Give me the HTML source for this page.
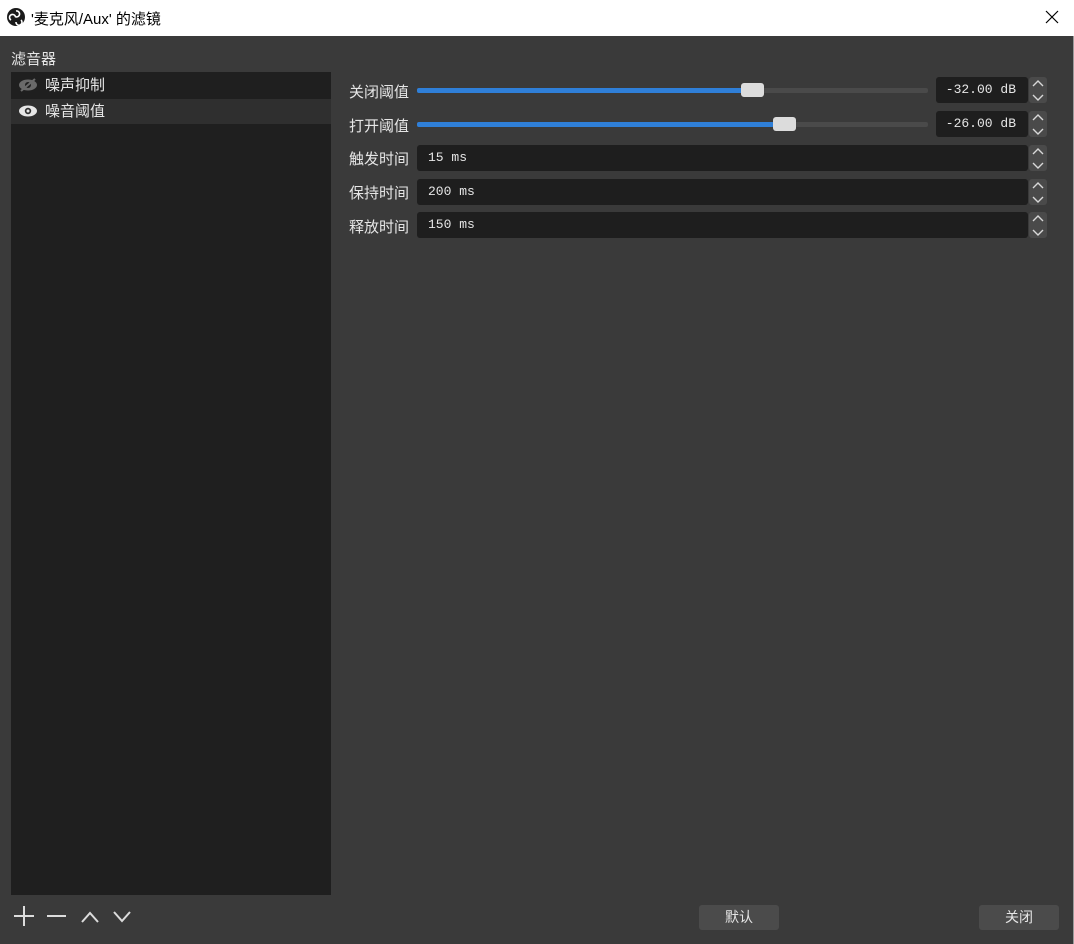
<!DOCTYPE html>
<html><head><meta charset="utf-8"><style>
*{margin:0;padding:0;box-sizing:border-box}
body{width:1074px;height:944px;background:#3a3a3a;font-family:"Liberation Sans","Noto Sans CJK SC",sans-serif;color:#e6e6e6;position:relative;overflow:hidden;font-size:14px}
.abs{position:absolute}
.title{left:0;top:0;width:1074px;height:36px;background:#fff;color:#000;font-size:15px}
.list{left:11px;top:72px;width:320px;height:823px;background:#1f1f1f}
.row{position:absolute;left:0;width:320px;height:25px;line-height:25px;padding-left:34px;font-size:15px}
.lbl{position:absolute;left:349px;font-size:15px;color:#e6e6e6}
.track{position:absolute;left:417px;width:511px;height:5px;background:#4a4a4a;border-radius:2px}
.fill{position:absolute;left:0;top:0;height:5px;background:#2f7fd8;border-radius:2px}
.thumb{position:absolute;top:-5px;width:23px;height:14px;background:#dcdcdc;border-radius:3px}
.box{position:absolute;background:#1e1e1e;border-radius:3px;font-family:"Liberation Mono","Noto Sans CJK SC",monospace;font-size:13px;color:#e6e6e6;line-height:26px}
.spin{position:absolute;left:1029px;width:18px;height:26px;background:#4a4a4a;border-radius:3px}
.btn{position:absolute;top:905px;width:80px;height:25px;background:#4b4b4b;border-radius:3px;text-align:center;line-height:25px;font-size:14px}
</style></head><body>
<div class="abs title">
<svg class="abs" style="left:7px;top:8px" width="18" height="18" viewBox="0 0 18 18"><circle cx="9" cy="9" r="9" fill="#1a1a1a"/><path d="M9 3a3 3 0 1 1-1 5.5M4 12a3 3 0 1 1 4.5-3M14 12a3 3 0 1 1-5 2" fill="none" stroke="#fff" stroke-width="1.6"/></svg>
<div class="abs" style="left:31px;top:8px">'麦克风/Aux' 的滤镜</div>
<svg class="abs" style="left:1045px;top:10px" width="14" height="14" viewBox="0 0 14 14"><path d="M1 1L13 13M13 1L1 13" stroke="#000" stroke-width="1.2"/></svg>
</div>
<div class="abs" style="left:1073px;top:36px;width:1px;height:908px;background:#9a9a9a"></div>
<div class="abs" style="left:11px;top:48px;font-size:15px">滤音器</div>
<div class="abs list">
<div class="row" style="top:1px;background:#1f1f1f">噪声抑制</div>
<div class="row" style="top:27px;background:#2f2f2f">噪音阈值</div>
<svg class="abs" style="left:7px;top:6px" width="20" height="14" viewBox="0 0 20 14"><ellipse cx="10" cy="7" rx="9" ry="5.5" fill="#6a6a6a"/><circle cx="10" cy="7" r="3" fill="#1f1f1f"/><path d="M3 13L17 1" stroke="#6a6a6a" stroke-width="2"/></svg>
<svg class="abs" style="left:7px;top:32px" width="20" height="14" viewBox="0 0 20 14"><ellipse cx="10" cy="7" rx="9" ry="5.5" fill="#e6e6e6"/><circle cx="10" cy="7" r="3.2" fill="#2f2f2f"/><circle cx="10" cy="7" r="1.5" fill="#e6e6e6"/></svg>
</div>

<div class="lbl" style="top:81px">关闭阈值</div>
<div class="track" style="top:88px"><div class="fill" style="width:326px"></div><div class="thumb" style="left:324px"></div></div>
<div class="box" style="left:936px;top:77px;width:92px;text-align:right;padding-right:12px">-32.00 dB</div>
<div class="spin" style="top:77px"></div>

<div class="lbl" style="top:115px">打开阈值</div>
<div class="track" style="top:122px"><div class="fill" style="width:357px"></div><div class="thumb" style="left:356px"></div></div>
<div class="box" style="left:936px;top:111px;width:92px;text-align:right;padding-right:12px">-26.00 dB</div>
<div class="spin" style="top:111px"></div>

<div class="lbl" style="top:148px">触发时间</div>
<div class="box" style="left:417px;top:145px;width:611px;padding-left:11px">15 ms</div>
<div class="spin" style="top:145px"></div>
<div class="lbl" style="top:182px">保持时间</div>
<div class="box" style="left:417px;top:179px;width:611px;padding-left:11px">200 ms</div>
<div class="spin" style="top:179px"></div>
<div class="lbl" style="top:216px">释放时间</div>
<div class="box" style="left:417px;top:212px;width:611px;padding-left:11px">150 ms</div>
<div class="spin" style="top:212px"></div>

<svg class="abs" style="left:1029px;top:77px" width="18" height="162" viewBox="0 0 18 162" fill="none" stroke="#d8d8d8" stroke-width="1.4">
<path d="M4 9L9 4L14 9M4 18L9 23L14 18"/>
<path d="M4 43L9 38L14 43M4 52L9 57L14 52"/>
<path d="M4 77L9 72L14 77M4 86L9 91L14 86"/>
<path d="M4 111L9 106L14 111M4 120L9 125L14 120"/>
<path d="M4 144L9 139L14 144M4 153L9 158L14 153"/>
</svg>

<svg class="abs" style="left:12px;top:905px" width="124" height="22" viewBox="0 0 124 22" fill="none" stroke="#dcdcdc" stroke-width="2">
<path d="M12 1V21M2 11H22"/><path d="M35 11H54"/><path d="M70 17L78 8L86 17"/><path d="M102 7L110 16L118 7"/>
</svg>
<div class="btn" style="left:699px">默认</div>
<div class="btn" style="left:979px">关闭</div>
</body></html>
